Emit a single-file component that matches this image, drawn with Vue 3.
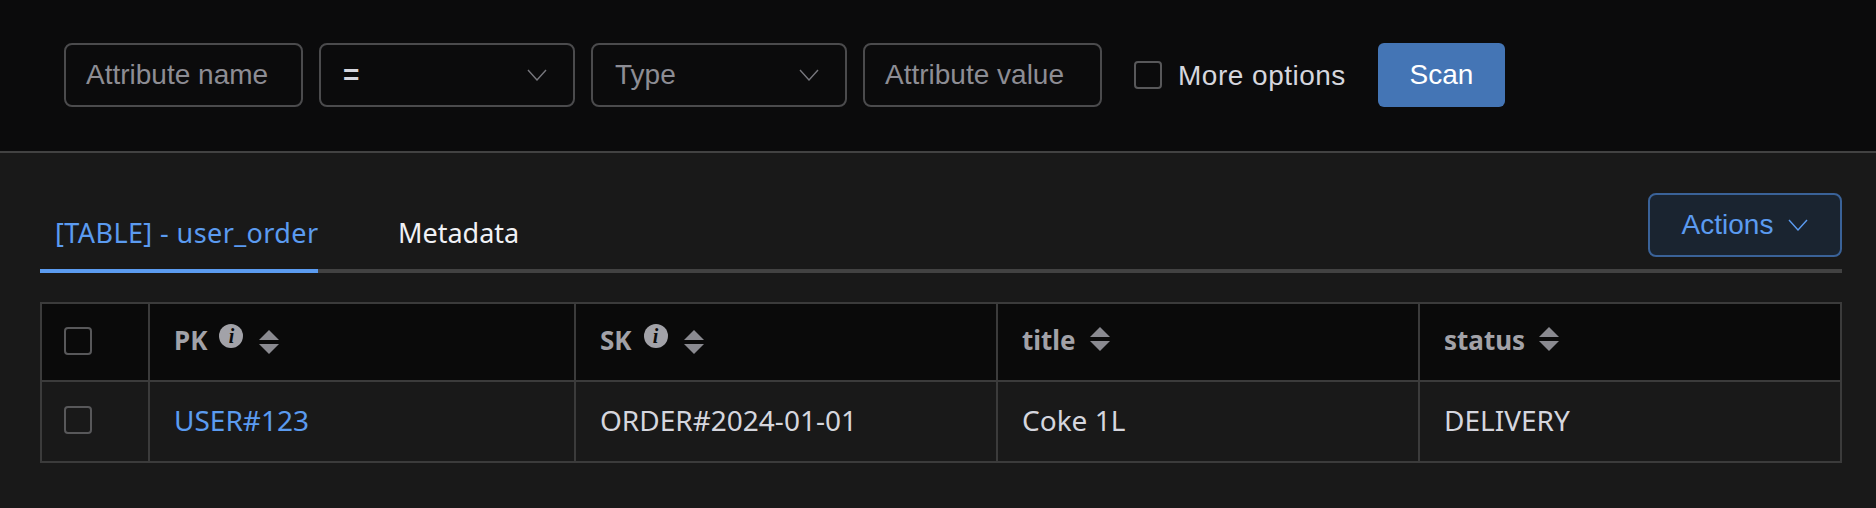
<script setup>
const columns = [
  { key: 'pk', label: 'PK', info: true },
  { key: 'sk', label: 'SK', info: true },
  { key: 'title', label: 'title', info: false },
  { key: 'status', label: 'status', info: false },
]

const row = { pk: 'USER#123', sk: 'ORDER#2024-01-01', title: 'Coke 1L', status: 'DELIVERY' }
</script>

<template>
  <div class="page">
    <div class="filter-bar">
      <div class="field input-name placeholder">Attribute name</div>
      <div class="field select select-op">
        <span class="op">=</span>
        <svg class="chevron" width="20" height="12" viewBox="0 0 20 12"><path d="M1 1l9 10 9-10" /></svg>
      </div>
      <div class="field select select-type">
        <span class="placeholder">Type</span>
        <svg class="chevron" width="20" height="12" viewBox="0 0 20 12"><path d="M1 1l9 10 9-10" /></svg>
      </div>
      <div class="field input-value placeholder">Attribute value</div>
      <label class="more">
        <span class="checkbox"></span>
        <span class="more-label">More options</span>
      </label>
      <button class="scan">Scan</button>
    </div>

    <div class="panel">
      <div class="tabs">
        <div class="tab active">[TABLE] - user_order</div>
        <div class="tab">Metadata</div>
        <button class="actions">
          <span>Actions</span>
          <svg class="chevron" width="20" height="12" viewBox="0 0 20 12"><path d="M1 1l9 10 9-10" /></svg>
        </button>
      </div>

      <div class="table">
        <div class="cell head check"><span class="checkbox"></span></div>
        <div v-for="col in columns" :key="col.key" class="cell head">
          <span class="head-label">{{ col.label }}</span>
          <span v-if="col.info" class="info">i</span>
          <svg class="sort" :class="{ 'with-info': col.info }" width="20" height="24" viewBox="0 0 20 24">
            <path d="M10 0l10 10H0z" />
            <path d="M0 14h20L10 24z" />
          </svg>
        </div>

        <div class="cell body check"><span class="checkbox"></span></div>
        <div v-for="col in columns" :key="col.key" class="cell body" :class="{ link: col.key === 'pk' }">
          {{ row[col.key] }}
        </div>
      </div>
    </div>
  </div>
</template>

<style>
html, body {
  margin: 0;
  background: #191919;
}
</style>

<style scoped>
.page {
  width: 1876px;
  height: 508px;
  overflow: hidden;
  background: #191919;
  font-family: "Noto Sans", sans-serif;
}

.filter-bar {
  display: flex;
  align-items: center;
  box-sizing: border-box;
  height: 153px;
  padding: 0 0 2px 64px;
  background: #0b0b0c;
  border-bottom: 2px solid #424242;
  font-family: "Liberation Sans", sans-serif;
  font-size: 28px;
}

.field {
  box-sizing: border-box;
  height: 64px;
  margin-right: 16px;
  border: 2px solid #4b4b4d;
  border-radius: 8px;
  line-height: 60px;
  white-space: nowrap;
}
.input-name { width: 239px; padding-left: 20px; }
.select-op { width: 256px; }
.select-type { width: 256px; }
.input-value { width: 239px; padding-left: 20px; }

.select {
  display: flex;
  align-items: center;
  justify-content: space-between;
  padding: 0 26px 0 22px;
}

.placeholder { color: #8d8d94; }
.op { color: #d5d6de; font-weight: 700; }

.chevron {
  flex: none;
  fill: none;
  stroke: #77777d;
  stroke-width: 1.4;
}

.checkbox {
  display: block;
  flex: none;
  box-sizing: border-box;
  width: 28px;
  height: 28px;
  border: 2px solid #58585a;
  border-radius: 4px;
}

.more {
  display: flex;
  align-items: center;
  gap: 16px;
  margin-left: 16px;
  color: #d5d6de;
}
.more-label {
  letter-spacing: 0.5px;
  padding-top: 2px;
}

.scan {
  width: 127px;
  height: 64px;
  margin-left: 32px;
  padding: 0;
  border: none;
  border-radius: 6px;
  background: #4475b5;
  color: #fff;
  font: inherit;
}

.panel {
  padding: 40px 34px 0 40px;
}

.tabs {
  display: flex;
  align-items: center;
  box-sizing: border-box;
  height: 80px;
  border-bottom: 4px solid #424242;
  font-size: 27px;
  color: #f0f1f5;
}

.tab {
  box-sizing: border-box;
  height: 80px;
  margin-bottom: -4px;
  padding: 21px 0 0 16px;
  line-height: 38px;
  margin-right: 64px;
  white-space: nowrap;
}
.tab.active {
  width: 278px;
  padding-left: 15px;
  border-bottom: 4px solid #5b9bf0;
  color: #5b9bf0;
  letter-spacing: 0.4px;
}

.actions {
  display: flex;
  align-items: center;
  justify-content: center;
  gap: 15px;
  box-sizing: border-box;
  width: 194px;
  height: 64px;
  margin: -12px 0 0 auto;
  padding: 0;
  border: 2px solid #3a6298;
  border-radius: 8px;
  background: #1a2430;
  color: #5b9bf0;
  font: 28px "Liberation Sans", sans-serif;
}
.actions .chevron { stroke: #5b9bf0; }

.table {
  display: grid;
  grid-template-columns: 108px 426px 422px 422px 420px;
  grid-template-rows: 78px 79px;
  box-sizing: border-box;
  width: 1802px;
  margin-top: 29px;
  border: 2px solid #3b3b3b;
  font-size: 28px;
}

.cell {
  display: flex;
  align-items: center;
  box-sizing: border-box;
  padding-left: 24px;
  padding-bottom: 3px;
  border-right: 2px solid #3b3b3b;
  white-space: nowrap;
}
.cell:nth-child(5n) { border-right: none; }

.head {
  background: #0a0a0a;
  border-bottom: 2px solid #3b3b3b;
  color: #a2a2a8;
  font-size: 26px;
  font-weight: 700;
  padding-bottom: 5px;
}
.head.check { padding-bottom: 3px; }

.body { color: #d5d6de; }
.body.link { color: #5b9bf0; }
.check { padding-left: 22px; }

.info {
  flex: none;
  width: 24px;
  height: 24px;
  margin: -7px 0 0 12px;
  border-radius: 50%;
  background: #a2a2a8;
  color: #0a0a0a;
  font: italic 700 20px/24px "Liberation Serif", serif;
  text-align: center;
}

.sort {
  flex: none;
  margin: -1px 0 0 14px;
  fill: #8a8a90;
}
.sort.with-info {
  margin: 4px 0 0 16px;
}
</style>
